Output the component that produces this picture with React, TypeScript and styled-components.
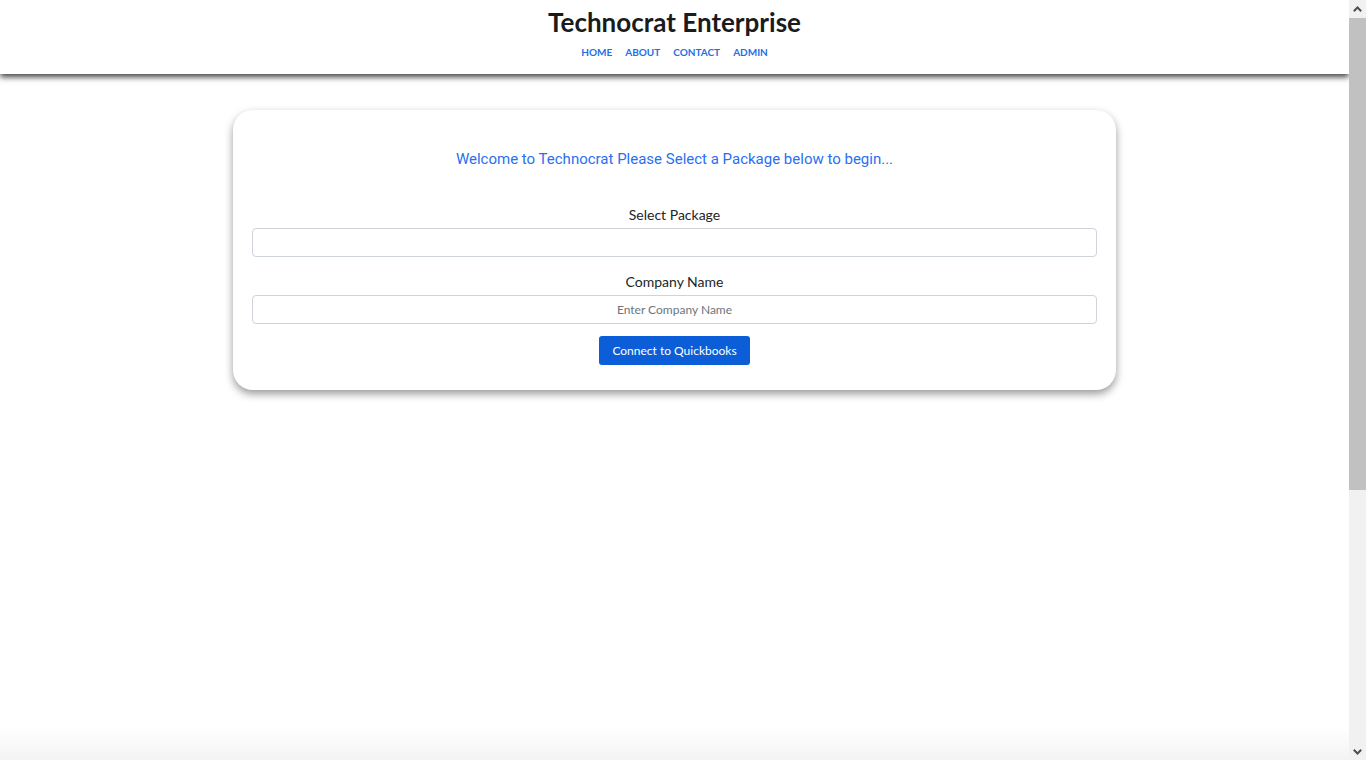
import styled, { createGlobalStyle } from "styled-components";

const GlobalStyle = createGlobalStyle`
  html, body {
    margin: 0;
    padding: 0;
    background: #fff;
    overflow: hidden;
  }
  * {
    box-sizing: border-box;
  }
`;

const Viewport = styled.div`
  height: 760px;
  display: flex;
`;

const ContentArea = styled.div`
  position: relative;
  flex: 1;
  overflow: hidden;
  font-family: "Trebuchet MS", Lato, "Open Sans", sans-serif;
  color: #212529;
`;

const Header = styled.header`
  height: 74px;
  background: #fff;
  box-shadow: 0 3px 6px rgba(0, 0, 0, 0.75);
  display: flex;
  flex-direction: column;
  align-items: center;
  padding-top: 6px;
`;

const Title = styled.h1`
  margin: 0;
  font-size: 26px;
  font-weight: 700;
  line-height: 32px;
  color: #1b1b1b;
`;

const Nav = styled.nav`
  display: flex;
  gap: 13px;
  margin-top: 7px;
`;

const NavLink = styled.a`
  font-size: 10px;
  font-weight: 700;
  text-transform: uppercase;
  color: #1f6fe5;
  text-decoration: none;
  line-height: 14px;
`;

const Main = styled.main`
  display: flex;
  justify-content: center;
  padding-top: 36px;
`;

const Card = styled.section`
  width: 883px;
  background: #fff;
  border-radius: 20px;
  box-shadow: 0 4px 9px rgba(0, 0, 0, 0.4);
  padding: 38px 19px 25px;
  display: flex;
  flex-direction: column;
  align-items: center;
`;

const Welcome = styled.h2`
  margin: 0 0 36px;
  font-family: Roboto, "Liberation Sans", sans-serif;
  font-size: 15px;
  font-weight: 400;
  line-height: 22px;
  color: #2a6ff2;
`;

const Field = styled.div`
  width: 100%;
  display: flex;
  flex-direction: column;
  align-items: center;

  & + & {
    margin-top: 16px;
  }
`;

const Label = styled.label`
  font-size: 14px;
  line-height: 18px;
  margin-bottom: 4px;
`;

const Select = styled.select`
  width: 100%;
  height: 29px;
  border: 1px solid #ced4da;
  border-radius: 4px;
  background: #fff;
  appearance: none;
  font-family: inherit;
`;

const Input = styled.input`
  width: 100%;
  height: 29px;
  border: 1px solid #ced4da;
  border-radius: 4px;
  text-align: center;
  font-family: inherit;
  font-size: 12px;
  color: #495057;

  &::placeholder {
    color: #6c757d;
  }
`;

const Button = styled.button`
  height: 29px;
  margin-top: 12px;
  padding: 0 13px;
  border: none;
  border-radius: 3px;
  background: #0b5ed7;
  color: #fff;
  font-family: inherit;
  font-size: 12px;
  cursor: pointer;
`;

const BottomFade = styled.div`
  position: absolute;
  left: 0;
  right: 0;
  bottom: 0;
  height: 32px;
  background: linear-gradient(to bottom, rgba(243, 243, 243, 0), #f3f3f3);
  pointer-events: none;
`;

const ScrollRail = styled.div`
  width: 17px;
  background: #f1f1f1;
  display: flex;
  flex-direction: column;
`;

const ScrollButton = styled.div`
  height: 17px;
  display: flex;
  align-items: center;
  justify-content: center;
`;

const ScrollTrack = styled.div`
  flex: 1;
  padding-top: 1px;
`;

const ScrollThumb = styled.div`
  height: 472px;
  background: #c1c1c1;
`;

function Chevron({ up }: { up?: boolean }) {
  return (
    <svg width="9" height="6" viewBox="0 0 9 6">
      <path
        d={up ? "M0.8 5.2 L4.5 1.5 L8.2 5.2" : "M0.8 0.8 L4.5 4.5 L8.2 0.8"}
        fill="none"
        stroke="#505050"
        strokeWidth="2"
      />
    </svg>
  );
}

export default function App() {
  return (
    <>
      <GlobalStyle />
      <Viewport>
        <ContentArea>
          <Header>
            <Title>Technocrat Enterprise</Title>
            <Nav>
              <NavLink href="#">Home</NavLink>
              <NavLink href="#">About</NavLink>
              <NavLink href="#">Contact</NavLink>
              <NavLink href="#">Admin</NavLink>
            </Nav>
          </Header>
          <Main>
            <Card>
              <Welcome>Welcome to Technocrat Please Select a Package below to begin...</Welcome>
              <Field>
                <Label>Select Package</Label>
                <Select defaultValue="">
                  <option value=""></option>
                </Select>
              </Field>
              <Field>
                <Label>Company Name</Label>
                <Input placeholder="Enter Company Name" />
              </Field>
              <Button>Connect to Quickbooks</Button>
            </Card>
          </Main>
          <BottomFade />
        </ContentArea>
        <ScrollRail>
          <ScrollButton>
            <Chevron up />
          </ScrollButton>
          <ScrollTrack>
            <ScrollThumb />
          </ScrollTrack>
          <ScrollButton>
            <Chevron />
          </ScrollButton>
        </ScrollRail>
      </Viewport>
    </>
  );
}
